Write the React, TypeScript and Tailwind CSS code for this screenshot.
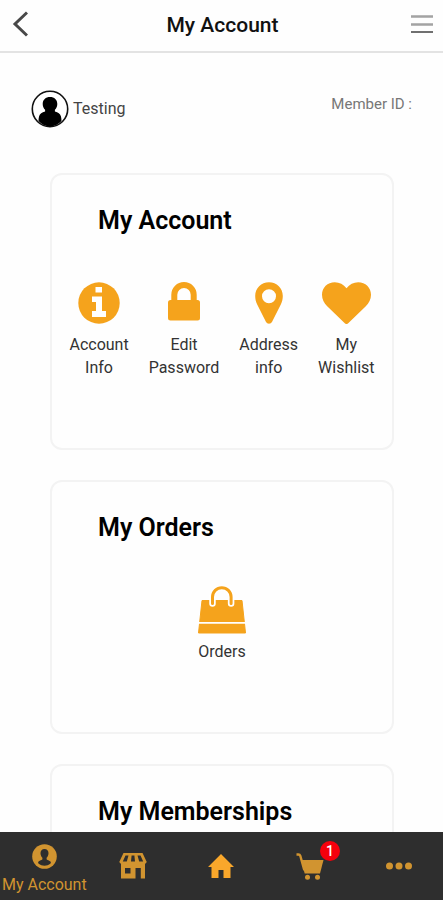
import { type ReactNode } from 'react';
import { clsx } from 'clsx';

const BackIcon = () => (
  <svg aria-hidden="true" className="h-[26px] w-4" fill="none" viewBox="0 0 16 26">
    <path d="M15 1.500 3 13l12 11.500" stroke="#484848" strokeWidth="3" />
  </svg>
);

const MenuIcon = () => (
  <svg aria-hidden="true" className="h-[18px] w-[22px]" fill="none" viewBox="0 0 22 18">
    <path d="M0 1.500h22M0 9.500h22" stroke="#a3a3a3" strokeWidth="2.500" />
    <path d="M0 17h22" stroke="#707070" strokeWidth="2" />
  </svg>
);

const AvatarIcon = () => (
  <svg aria-hidden="true" className="size-[38px]" viewBox="0 0 38 38">
    <circle cx="19" cy="19" fill="#fff" r="17.700" stroke="#111" strokeWidth="1.600" />
    <path
      d="M19 7c4.400 0 7.300 2.700 7.300 7 0 2.600-1 4.400-2.400 5.800v1.700c3.200.8 5.200 2 6 4.700.4 1.300.6 3 .6 4.800A17 17 0 0 1 19 36.500 17 17 0 0 1 7.500 31c0-1.800.2-3.500.6-4.800.8-2.700 2.800-3.900 6-4.700v-1.700c-1.400-1.400-2.400-3.200-2.400-5.800 0-4.300 2.900-7 7.300-7Z"
      fill="#000"
    />
  </svg>
);

const InfoIcon = () => (
  <svg aria-hidden="true" className="size-[42px]" viewBox="0 0 42 42">
    <circle cx="21" cy="21" fill="#f5a31c" r="20.700" />
    <path d="M17.500 5H24v5.500h-6.500zM14 14.500h10V29h4v6H14v-6h4v-9h-4z" fill="#fff" />
  </svg>
);

const LockIcon = () => (
  <svg aria-hidden="true" className="h-[42px] w-8" fill="none" viewBox="0 0 32 42">
    <path d="M6.300 20v-7.300a9.700 9.700 0 0 1 19.400 0V20" stroke="#f5a31c" strokeWidth="6" />
    <rect fill="#f5a31c" height="20.500" rx="2.500" width="32" y="18" />
  </svg>
);

const PinIcon = () => (
  <svg aria-hidden="true" className="h-[42px] w-7" viewBox="0 0 28 42">
    <path
      d="M14 .2C6.200.2.200 6.200.2 14c0 3.300.7 5.800 2 8.500l8.700 17.300c1.300 2.600 4.900 2.600 6.200 0l8.700-17.300c1.300-2.700 2-5.200 2-8.500C27.800 6.200 21.800.2 14 .2Zm0 7a7 7 0 1 1 0 14 7 7 0 0 1 0-14Z"
      fill="#f5a31c"
      fillRule="evenodd"
    />
  </svg>
);

const HeartIcon = () => (
  <svg aria-hidden="true" className="h-[42px] w-[49px]" viewBox="0 0 49 42">
    <path
      d="M24.500 6.200C27.500 2.200 31.500.2 36.200.2 43.500.2 49 5.600 49 12.800c0 4.700-2 8.200-5.200 11.400L26.200 41.200a2.400 2.400 0 0 1-3.400 0L5.200 24.200C2 21 0 17.500 0 12.800 0 5.600 5.500.2 12.800.2c4.700 0 8.700 2 11.700 6Z"
      fill="#f5a31c"
    />
  </svg>
);

const BagIcon = () => (
  <svg aria-hidden="true" className="size-12" fill="none" viewBox="0 0 48 48">
    <path
      d="M4 14.500h40L47.500 47H.5z"
      fill="#f5a31c"
      stroke="#f5a31c"
      strokeLinejoin="round"
      strokeWidth="1"
    />
    <path d="M0 36.800h48" stroke="#fff" strokeWidth="1.800" />
    <path d="M14.500 17.500V11a9.300 9.300 0 0 1 18.600 0v6.500" stroke="#fff" strokeLinecap="round" strokeWidth="6.500" />
    <path d="M14.500 17.500V11a9.300 9.300 0 0 1 18.600 0v6.500" stroke="#f5a31c" strokeLinecap="round" strokeWidth="3" />
  </svg>
);

const AccountIcon = () => (
  <svg aria-hidden="true" className="size-[25px]" viewBox="0 0 25 25">
    <circle cx="12.500" cy="12.500" fill="#d19430" r="12.300" />
    <path
      d="M12.500 5c2.600 0 4 1.700 4 4.300 0 1.900-.8 3.500-1.900 4.500v1.400c0 .8 3 1 4 2.600.5.800.3 1.500-.3 2-1.600 1.300-3.600 2-5.800 2s-4.200-.7-5.800-2c-.6-.5-.8-1.200-.3-2 1-1.600 4-1.800 4-2.600v-1.400c-1.100-1-1.900-2.600-1.900-4.500C8.500 6.700 9.900 5 12.500 5Z"
      fill="#2e2e2e"
    />
  </svg>
);

const StoreIcon = () => (
  <svg aria-hidden="true" className="h-[26px] w-7" viewBox="0 0 28 26">
    <path
      d="M4.500 0h19l4 8.500c0 1.500-.5 2-1.500 2H2c-1 0-1.500-.5-1.500-2z"
      fill="#d19430"
    />
    <path
      d="M6.500 2.500h3L7.800 8.500H3.800zM12.600 2.500h2.800l.6 6h-4zM18.500 2.500h3l2.700 6h-4z"
      fill="#2e2e2e"
    />
    <path
      d="M2 10h24v15.500h-4.200V15h-5.300v10.500H2zM6 15v5.500h5.500V15z"
      fill="#d19430"
      fillRule="evenodd"
    />
  </svg>
);

const HomeIcon = () => (
  <svg aria-hidden="true" className="h-6 w-[26px]" viewBox="0 0 26 24">
    <path d="M13 0 26 13h-3.500v11h-7v-8h-5v8h-7V13H0z" fill="#f9a72b" />
  </svg>
);

const CartIcon = () => (
  <svg aria-hidden="true" className="h-[27px] w-7" fill="none" viewBox="0 0 28 27">
    <path d="M.5 1.500h2c1 0 1.500.4 1.800 1.300l4 14.500" stroke="#d19430" strokeWidth="2.400" />
    <path d="M5 7h22.500L24 20.500H8.700z" fill="#d19430" />
    <circle cx="11.500" cy="24.300" fill="#d19430" r="2.500" />
    <circle cx="21.500" cy="24.300" fill="#d19430" r="2.500" />
  </svg>
);

const MoreIcon = () => (
  <svg aria-hidden="true" className="h-2 w-[26px]" fill="#d19430" viewBox="0 0 26 8">
    <circle cx="3.500" cy="4" r="3.500" />
    <circle cx="13" cy="4" r="3.500" />
    <circle cx="22.500" cy="4" r="3.500" />
  </svg>
);

const accountLinks = [
  { lines: ['Account', 'Info'], icon: <InfoIcon /> },
  { lines: ['Edit', 'Password'], icon: <LockIcon /> },
  { lines: ['Address', 'info'], icon: <PinIcon /> },
  { lines: ['My', 'Wishlist'], icon: <HeartIcon /> },
];

const orderLinks = [{ lines: ['Orders'], icon: <BagIcon /> }];

const Section = ({
  title,
  children,
}: {
  title: string;
  children?: ReactNode;
}) => (
  <section className="min-h-[254px] rounded-xl border-2 border-[#f3f3f3] px-4 pt-7 pb-[69px]">
    <h2 className="pl-[30px] text-[25px] leading-9 font-semibold text-black">
      {title}
    </h2>
    {children}
  </section>
);

const LinkRow = ({ items }: { items: { lines: string[]; icon: ReactNode }[] }) => (
  <div className="mt-[41px] flex justify-center gap-5">
    {items.map(({ lines, icon }) => (
      <a
        className="flex flex-col items-center text-center text-base leading-[23px] text-[#333]"
        href="#"
        key={lines.join(' ')}
      >
        <span className="flex h-[53px] items-center pb-[7px]">{icon}</span>
        {lines.map((line) => (
          <span key={line}>{line}</span>
        ))}
      </a>
    ))}
  </div>
);

const NavItem = ({
  name,
  icon,
  active,
  badge,
}: {
  name: string;
  icon: ReactNode;
  active?: boolean;
  badge?: number;
}) => (
  <a
    aria-label={name}
    className={clsx(
      'flex flex-1 flex-col items-center text-[#d19430]',
      active ? 'pt-3' : 'justify-center',
    )}
    href="#"
  >
    <span className="relative">
      {icon}
      {badge && (
        <span className="absolute -top-3 -right-4 flex size-5 items-center justify-center rounded-full bg-[#f5000c] text-sm font-medium text-white">
          {badge}
        </span>
      )}
    </span>
    {active && (
      <span className="mt-1 text-base leading-6 whitespace-nowrap">
        {name}
      </span>
    )}
  </a>
);

export default function App() {
  return (
    <div className="flex h-screen flex-col bg-[#fefefe] font-['Roboto',sans-serif]">
      <header className="flex h-[53px] shrink-0 items-center justify-between border-b-2 border-[#e3e3e3] pr-[10px] pb-1 pl-3">
        <button aria-label="Back" className="w-[22px]" type="button">
          <BackIcon />
        </button>
        <h1 className="pt-0.5 text-[21px] leading-7 font-medium text-[#111]">
          My Account
        </h1>
        <button aria-label="Menu" type="button">
          <MenuIcon />
        </button>
      </header>

      <main className="min-h-0 flex-1 overflow-y-auto pt-[37px] [scrollbar-width:none]">
        <div className="flex items-start justify-between px-[31px]">
          <div className="flex items-center gap-1 text-base text-[#444]">
            <AvatarIcon />
            <span>Testing</span>
          </div>
          <span className="pt-1 text-[15px] leading-5 text-[#777]">Member ID :</span>
        </div>

        <div className="mt-[45px] mr-[49px] ml-[50px] space-y-[30px] pb-8">
          <Section title="My Account">
            <LinkRow items={accountLinks} />
          </Section>
          <Section title="My Orders">
            <LinkRow items={orderLinks} />
          </Section>
          <Section title="My Memberships" />
        </div>
      </main>

      <nav className="flex h-[68px] shrink-0 bg-[#2e2e2e]">
        <NavItem active icon={<AccountIcon />} name="My Account" />
        <NavItem icon={<StoreIcon />} name="Shop" />
        <NavItem icon={<HomeIcon />} name="Home" />
        <NavItem badge={1} icon={<CartIcon />} name="Cart" />
        <NavItem icon={<MoreIcon />} name="More" />
      </nav>
    </div>
  );
}
